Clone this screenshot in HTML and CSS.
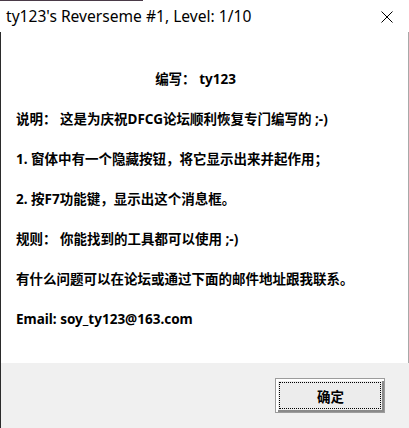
FILE: index.html
```html
<!DOCTYPE html>
<html lang="zh-CN">
<head>
<meta charset="utf-8">
<title>ty123's Reverseme #1</title>
<link rel="stylesheet" href="styles.css">
</head>
<body>
<div class="window">
  <div class="titlebar">
    <span class="title">ty123's Reverseme #1, Level: 1/10</span>
    <span class="close">
      <svg width="12" height="12" viewBox="0 0 12 12"><path d="M0.5 0.5 L11.5 11.5 M11.5 0.5 L0.5 11.5" stroke="#000" stroke-width="1" fill="none"/></svg>
    </span>
  </div>
  <div class="content">
    <p class="line center">编写： ty123</p>
    <p class="line">说明： 这是为庆祝DFCG论坛顺利恢复专门编写的 ;-)</p>
    <p class="line">1. 窗体中有一个隐藏按钮，将它显示出来并起作用；</p>
    <p class="line">2. 按F7功能键，显示出这个消息框。</p>
    <p class="line">规则： 你能找到的工具都可以使用 ;-)</p>
    <p class="line">有什么问题可以在论坛或通过下面的邮件地址跟我联系。</p>
    <p class="line">Email: soy_ty123@163.com</p>
  </div>
  <div class="footer">
    <button class="btn"><span class="focus">确定</span></button>
  </div>
</div>
</body>
</html>
```
FILE: styles.css
```css
html, body {
  margin: 0;
  padding: 0;
  background: #ffffff;
}
.window {
  width: 409px;
  height: 428px;
  display: flex;
  flex-direction: column;
  position: relative;
  overflow: hidden;
}
.window::before {
  content: "";
  position: absolute;
  left: 0;
  top: 0;
  width: 143px;
  height: 1px;
  background: #4a3a48;
}
.titlebar {
  height: 32px;
  display: flex;
  align-items: center;
  justify-content: space-between;
  padding: 0 16px 0 6px;
  font-family: "Noto Sans", "Open Sans", sans-serif;
  font-size: 15.6px;
  color: #000;
}
.close {
  display: flex;
  width: 12px;
  height: 12px;
  margin-top: 2px;
}
.content {
  height: 331px;
  box-sizing: border-box;
  padding: 37px 33px 0 16px;
  display: flex;
  flex-direction: column;
  gap: 20px;
  border-left: 1px solid #2b2b2b;
  border-right: 1px solid #a8a8a8;
  font-family: "Noto Sans", "Noto Sans CJK SC", sans-serif;
  font-weight: 700;
  font-size: 13.5px;
  color: #000;
}
.line {
  margin: 0 0 0 -1px;
  line-height: 20px;
  white-space: nowrap;
}
.center {
  text-align: center;
}
.footer {
  flex: 1;
  background: #f0f0f0;
  border-left: 1px solid #2b2b2b;
  display: flex;
  justify-content: flex-end;
  align-items: flex-start;
  padding: 15px 24px 0 0;
}
.btn {
  width: 110px;
  height: 35px;
  padding: 3px;
  margin: 0;
  background: #ececec;
  border: 1px solid #9c9c9c;
  box-shadow: inset 2px 2px 0 #ffffff, inset -2px -2px 0 #8a8a8a;
  display: flex;
  cursor: default;
}
.focus {
  flex: 1;
  display: flex;
  align-items: center;
  justify-content: center;
  border: 1px dotted #000;
  font-family: "Noto Sans CJK SC", sans-serif;
  font-weight: 700;
  font-size: 13.5px;
  color: #000;
  padding-left: 1px;
}
```
